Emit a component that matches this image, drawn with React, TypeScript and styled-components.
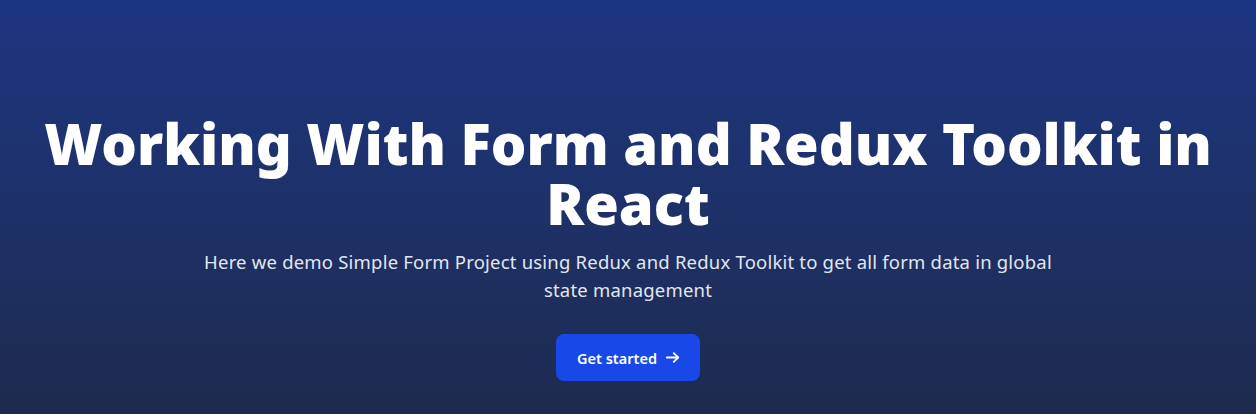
import React from "react";
import styled, { createGlobalStyle } from "styled-components";

const GlobalStyle = createGlobalStyle`
  html, body { margin: 0; padding: 0; }
  body {
    font-family: "Noto Sans", "Open Sans", sans-serif;
    background: #1e2a4c;
  }
  * { box-sizing: border-box; }
`;

const Hero = styled.section`
  width: 100%;
  height: 414px;
  background: linear-gradient(180deg, #1d3682 0%, #1e2b4f 100%);
  display: flex;
  flex-direction: column;
  align-items: center;
  padding-top: 113px;
  text-align: center;
`;

const Title = styled.h1`
  margin: 0;
  font-family: "Noto Sans", sans-serif;
  font-weight: 900;
  font-size: 56px;
  line-height: 60px;
  color: #ffffff;
  max-width: 1220px;
`;

const Subtitle = styled.p`
  margin: 15px 0 0;
  max-width: 870px;
  font-size: 18.5px;
  letter-spacing: 0.2px;
  line-height: 28px;
  color: #e2e6ee;
`;

const Button = styled.a`
  margin-top: 30px;
  display: inline-flex;
  align-items: center;
  gap: 8px;
  height: 47px;
  padding: 0 20px 0 21px;
  border-radius: 8px;
  background: #1848e8;
  color: #ffffff;
  font-size: 14.5px;
  font-weight: 600;
  text-decoration: none;
`;

export default function App() {
  return (
    <>
      <GlobalStyle />
      <Hero>
        <Title>Working With Form and Redux Toolkit in React</Title>
        <Subtitle>
          Here we demo Simple Form Project using Redux and Redux Toolkit to get all form data in global state management
        </Subtitle>
        <Button href="#">
          Get started
          <svg width="15" height="15" viewBox="0 0 24 24" fill="none" stroke="currentColor" strokeWidth="3" strokeLinecap="round" strokeLinejoin="round">
            <path d="M3 12h18" />
            <path d="M14 5l7 7-7 7" />
          </svg>
        </Button>
      </Hero>
    </>
  );
}
